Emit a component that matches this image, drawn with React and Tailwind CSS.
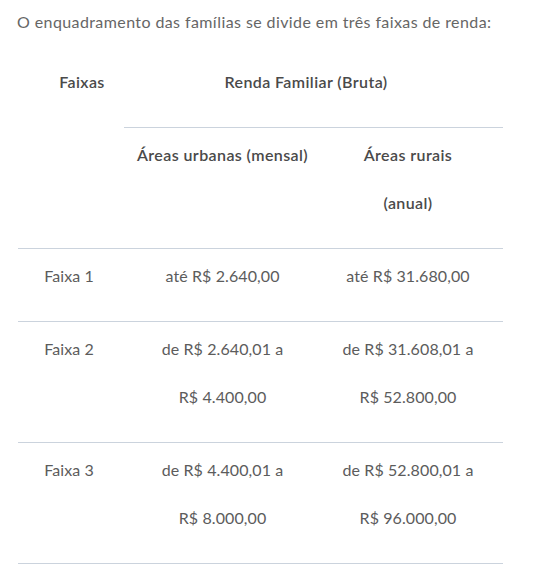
import React from 'react';

const rows = [
  { faixa: 'Faixa 1', urbana: ['até R$ 2.640,00'], rural: ['até R$ 31.680,00'] },
  { faixa: 'Faixa 2', urbana: ['de R$ 2.640,01 a', 'R$ 4.400,00'], rural: ['de R$ 31.608,01 a', 'R$ 52.800,00'] },
  { faixa: 'Faixa 3', urbana: ['de R$ 4.400,01 a', 'R$ 8.000,00'], rural: ['de R$ 52.800,01 a', 'R$ 96.000,00'] },
];

const cell = 'pt-[3px] pb-[21px] align-top text-center leading-[48px]';

const App = () => {
  return (
    <div className="w-[536px] h-[573px] bg-white font-['Lato',sans-serif] text-[16px] text-[#5c5c5c]">
      <p className="pl-[17px] pt-[10px] leading-[24px] tracking-[0.4px] text-[#666]">
        O enquadramento das famílias se divide em três faixas de renda:
      </p>

      <table className="ml-[18px] mt-[21px] w-[485px] table-fixed border-collapse">
        <colgroup>
          <col className="w-[106px]" />
          <col className="w-[197px]" />
          <col className="w-[182px]" />
        </colgroup>
        <thead className="text-[#4a4a4a] font-semibold tracking-[0.4px]">
          <tr>
            <th rowSpan={2} className={`${cell} pl-[22px] font-semibold`}>Faixas</th>
            <th colSpan={2} className={`${cell} pr-[15px] font-semibold`}>Renda Familiar (Bruta)</th>
          </tr>
          <tr>
            <th className={`${cell} border-t border-[#cbd3dd] font-semibold`}>Áreas urbanas (mensal)</th>
            <th className={`${cell} border-t border-[#cbd3dd] pr-[8px] font-semibold`}>
              Áreas rurais
              <br />
              (anual)
            </th>
          </tr>
        </thead>
        <tbody className="tracking-[0.1px]">
          {rows.map(row => (
            <tr key={row.faixa} className="border-t border-b border-[#cbd3dd]">
              <td className={`${cell} pr-[4px]`}>{row.faixa}</td>
              <td className={cell}>
                {row.urbana.map(line => (
                  <div key={line}>{line}</div>
                ))}
              </td>
              <td className={`${cell} pr-[8px]`}>
                {row.rural.map(line => (
                  <div key={line}>{line}</div>
                ))}
              </td>
            </tr>
          ))}
        </tbody>
      </table>
    </div>
  );
};

export default App;
